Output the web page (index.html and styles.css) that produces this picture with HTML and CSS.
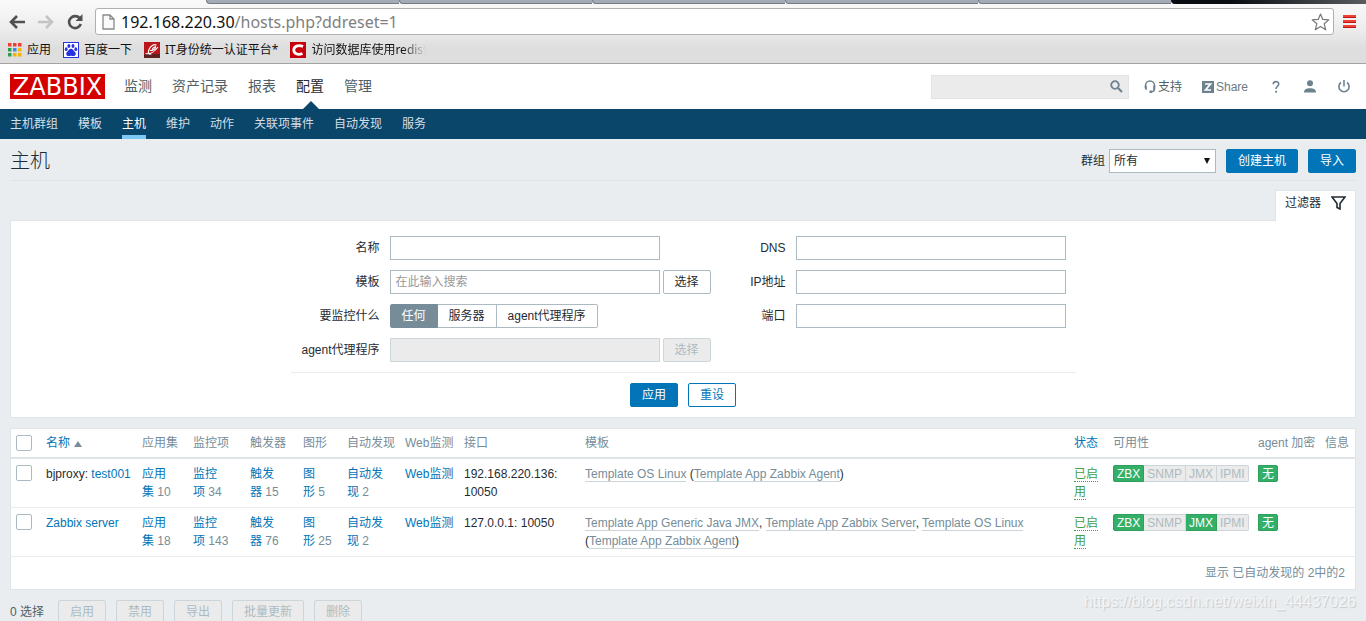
FILE: index.html
```html
<!DOCTYPE html>
<html lang="zh-CN">
<head>
<meta charset="utf-8">
<title>主机</title>
<link rel="stylesheet" href="styles.css">
</head>
<body>
<div class="browser">
  <div class="tabstrip"><span class="tab-active"></span><span class="tab"></span><span class="tab"></span><span class="tab"></span><span class="tab"></span><span class="tab"></span><span class="tab-rest"></span></div>
  <div class="toolbar">
    <button class="tool" aria-label="后退"><svg width="18" height="16" viewBox="0 0 18 16"><path d="M9 2 3 8l6 6M3 8h14" fill="none" stroke="#505050" stroke-width="2.6"/></svg></button>
    <button class="tool" aria-label="前进"><svg width="18" height="16" viewBox="0 0 18 16"><path d="M9 2l6 6-6 6M15 8H1" fill="none" stroke="#c4c4c4" stroke-width="2.6"/></svg></button>
    <button class="tool" aria-label="刷新"><svg width="18" height="16" viewBox="0 0 18 16"><path d="M14 4.6A6 6 0 1 0 14.8 10" fill="none" stroke="#505050" stroke-width="2.6"/><path d="M16.500 0v7H9.500z" fill="#505050"/></svg></button>
    <div class="address">
      <svg width="13" height="16" viewBox="0 0 13 16"><path d="M1 1h7l4 4v10H1zM8 1v4h4" fill="#fafafa" stroke="#8a8a8a" stroke-width="1.300"/></svg>
      <div class="url" role="textbox" contenteditable="true" aria-label="地址" spellcheck="false">192.168.220.30<span>/hosts.php?ddreset=1</span></div>
      <button class="star" aria-label="收藏"><svg width="19" height="18" viewBox="0 0 19 18"><path d="M9.500 1l2.300 5.400 6 .5-4.600 3.900 1.500 6-5.200-3.200-5.200 3.200 1.500-6L1.200 6.900l6-.5z" fill="#fff" stroke="#777" stroke-width="1.200" stroke-linejoin="round"/></svg></button>
    </div>
    <button class="tool menu" aria-label="菜单"><svg width="13" height="13" viewBox="0 0 13 13"><path d="M0 1h13M0 6h13M0 11h13" stroke="#ee4035" stroke-width="2"/><path d="M0 2.500h13M0 7.500h13M0 12.500h13" stroke="#c41414"/></svg></button>
  </div>
  <nav class="bookmarks" aria-label="书签">
    <a href="#"><svg width="14" height="14" viewBox="0 0 14 14"><path d="M0 0h3.500v3.500H0zM5 0h3.500v3.500H5zM10 0h3.500v3.500H10z" fill="#ea4335"/><path d="M0 5h3.500v3.500H0z" fill="#2a9d4e"/><path d="M5 5h3.500v3.500H5z" fill="#3b8be8"/><path d="M10 5h3.500v3.500H10zM5 10h3.500v3.500H5zM10 10h3.500v3.500H10z" fill="#f4b400"/><path d="M0 10h3.500v3.500H0z" fill="#2a9d4e"/></svg>应用</a>
    <a href="#"><svg width="16" height="16" viewBox="0 0 16 16"><rect x=".5" y=".5" width="15" height="15" fill="#fff" stroke="#2932e1"/><g fill="#2932e1"><ellipse cx="5.900" cy="4" rx="1.500" ry="2"/><ellipse cx="10" cy="4" rx="1.500" ry="2"/><ellipse cx="3.200" cy="7.200" rx="1.400" ry="1.900"/><ellipse cx="12.800" cy="7.200" rx="1.400" ry="1.900"/><path d="M8 6.800c2 0 2.500 2.200 4 3.300 1.500 1.200.8 4-1.300 4-1 0-1.700-.4-2.700-.4s-1.700.4-2.700.4c-2.100 0-2.800-2.800-1.300-4 1.500-1.100 2-3.300 4-3.300z"/></g></svg>百度一下</a>
    <a href="#"><svg width="16" height="16" viewBox="0 0 16 16"><rect width="16" height="16" fill="#b9151b"/><path d="M0 12h16v4H0z" fill="#5e2020"/><path d="M12.500 3.300C10 1.500 6.500 4 5 7.500s0 5.500 2.500 4.300M6 8.500c3 0 5-1.500 5.500-3S9.500 5 8.300 7.200M1.500 11.500C6 12.500 11 9.500 14 5" fill="none" stroke="#fff" stroke-width="1.200"/></svg>IT身份统一认证平台*</a>
    <a href="#" class="fade"><svg width="16" height="16" viewBox="0 0 16 16"><rect width="16" height="16" fill="#c8000a"/><path d="M13 4.500C8 2.300 3.800 4.500 3.800 8s3.700 5.500 8.700 3.500" fill="none" stroke="#fff" stroke-width="2.800"/></svg>访问数据库使用redis修</a>
  </nav>
</div>

<header class="top">
  <a href="#" class="logo" aria-label="ZABBIX">ZABBIX</a>
  <nav class="main-nav">
    <a href="#">监测</a><a href="#">资产记录</a><a href="#">报表</a><a href="#" class="current">配置</a><a href="#">管理</a>
  </nav>
  <form class="search">
    <input type="text" aria-label="搜索">
    <button type="button" aria-label="搜索"><svg width="13" height="13" viewBox="0 0 13 13"><circle cx="5" cy="5" r="3.800" fill="none" stroke="#6c838f" stroke-width="1.800"/><path d="M8 8l4 4" stroke="#6c838f" stroke-width="2.200"/></svg></button>
  </form>
  <div class="user-links">
    <a href="#" class="support"><svg width="12" height="13" viewBox="0 0 12 13"><path d="M1.500 8V5.500a4.500 4.500 0 0 1 9 0V9c0 1.800-1 2.700-3 2.700" fill="none" stroke="#6c838f" stroke-width="1.400"/><path d="M.8 5.500h2V10H2L.8 8.500zM9.200 5.500h2v3L10 10h-.8zM5.500 10.500H8V13H5.500z" fill="#6c838f"/></svg>支持</a>
    <a href="#" class="share"><svg width="12" height="12" viewBox="0 0 12 12"><path d="M0 0h12v12H0z" fill="#6c838f"/><path d="M3 3h5.500L3.500 9H9" fill="none" stroke="#fff" stroke-width="1.700"/></svg>Share</a>
    <a href="#" class="icon" aria-label="帮助"><svg width="12" height="14" viewBox="0 0 12 14"><path d="M3.200 4.300C3.200.8 8.700.8 8.700 4c0 2.300-2.600 2.300-2.600 5" fill="none" stroke="#6c838f" stroke-width="1.600"/><path d="M5.200 10.800h1.900v1.900H5.200z" fill="#6c838f"/></svg></a>
    <a href="#" class="icon" aria-label="用户"><svg width="12" height="13" viewBox="0 0 12 13"><circle cx="6" cy="3.300" r="3" fill="#6c838f"/><path d="M0 12.500C0 9 2.500 8.200 6 8.200s6 .8 6 4.300z" fill="#6c838f"/></svg></a>
    <a href="#" class="icon" aria-label="退出"><svg width="12" height="13" viewBox="0 0 12 13"><path d="M3 2.500a5.100 5.100 0 1 0 6 0" fill="none" stroke="#6c838f" stroke-width="1.600"/><path d="M6 0v6.500" stroke="#6c838f" stroke-width="1.600"/></svg></a>
  </div>
</header>
<nav class="sub-nav">
  <a href="#">主机群组</a><a href="#">模板</a><a href="#" class="current">主机</a><a href="#">维护</a><a href="#">动作</a><a href="#">关联项事件</a><a href="#">自动发现</a><a href="#">服务</a>
</nav>

<main>
  <div class="title-bar">
    <h1>主机</h1>
    <form class="title-actions">
      <label for="group">群组</label>
      <span class="select"><select id="group"><option>所有</option></select></span>
      <button type="button" class="btn primary">创建主机</button>
      <button type="button" class="btn primary">导入</button>
    </form>
  </div>

  <div class="filter-tab"><button type="button">过滤器<svg width="15" height="14" viewBox="0 0 15 14"><path d="M1 1h13L9 7.500V13l-3-1.500v-4z" fill="none" stroke="#1f2c33" stroke-width="1.600"/></svg></button></div>
  <form class="filter">
    <div class="fields">
      <label for="name">名称</label>
      <div class="field"><input id="name" type="text"></div>
      <label for="dns">DNS</label>
      <div class="field"><input id="dns" type="text"></div>
      <label for="tpl">模板</label>
      <div class="field"><input id="tpl" type="text" placeholder="在此输入搜索"><button type="button" class="btn plain">选择</button></div>
      <label for="ip">IP地址</label>
      <div class="field"><input id="ip" type="text"></div>
      <span class="label" id="monitored">要监控什么</span>
      <div class="segments" role="radiogroup" aria-labelledby="monitored">
        <label><input type="radio" name="m" checked><span>任何</span></label><label><input type="radio" name="m"><span>服务器</span></label><label><input type="radio" name="m"><span>agent代理程序</span></label>
      </div>
      <label for="port">端口</label>
      <div class="field"><input id="port" type="text"></div>
      <label for="proxy">agent代理程序</label>
      <div class="field"><input id="proxy" type="text" disabled><button type="button" class="btn" disabled>选择</button></div>
    </div>
    <div class="filter-actions">
      <button type="button" class="btn primary">应用</button>
      <button type="button" class="btn outline">重设</button>
    </div>
  </form>

  <div class="list">
  <table>
    <colgroup><col class="c-check"><col class="c-name"><col class="c-apps"><col class="c-items"><col class="c-trig"><col class="c-graph"><col class="c-disc"><col class="c-web"><col class="c-iface"><col><col class="c-status"><col class="c-avail"><col class="c-enc"><col class="c-info"></colgroup>
    <thead><tr>
      <th><input type="checkbox" aria-label="全选"></th>
      <th><a href="#">名称<svg class="sort" width="8" height="6" viewBox="0 0 8 6"><path d="M4 0l4 6H0z" fill="#768d99"/></svg></a></th>
      <th>应用集</th><th>监控项</th><th>触发器</th><th>图形</th><th>自动发现</th><th>Web监测</th><th>接口</th><th>模板</th><th><a href="#">状态</a></th><th>可用性</th><th>agent 加密</th><th>信息</th>
    </tr></thead>
    <tbody>
    <tr>
      <td><input type="checkbox" aria-label="test001"></td>
      <td>bjproxy: <a href="#">test001</a></td>
      <td><a href="#">应用集</a><span class="count">&nbsp;10</span></td>
      <td><a href="#">监控项</a><span class="count">&nbsp;34</span></td>
      <td><a href="#">触发器</a><span class="count">&nbsp;15</span></td>
      <td class="narrow"><a href="#">图形</a><span class="count">&nbsp;5</span></td>
      <td><a href="#">自动发现</a><span class="count">&nbsp;2</span></td>
      <td><a href="#">Web监测</a></td>
      <td>192.168.220.136: 10050</td>
      <td><a href="#" class="tpl">Template OS Linux</a> (<a href="#" class="tpl">Template App Zabbix Agent</a>)</td>
      <td><a href="#" class="enabled">已启用</a></td>
      <td><span class="badges"><span class="on">ZBX</span><span>SNMP</span><span>JMX</span><span>IPMI</span></span></td>
      <td><span class="badges"><span class="on none">无</span></span></td>
      <td></td>
    </tr>
    <tr>
      <td><input type="checkbox" aria-label="Zabbix server"></td>
      <td><a href="#">Zabbix server</a></td>
      <td><a href="#">应用集</a><span class="count">&nbsp;18</span></td>
      <td><a href="#">监控项</a><span class="count">&nbsp;143</span></td>
      <td><a href="#">触发器</a><span class="count">&nbsp;76</span></td>
      <td class="narrow"><a href="#">图形</a><span class="count">&nbsp;25</span></td>
      <td><a href="#">自动发现</a><span class="count">&nbsp;2</span></td>
      <td><a href="#">Web监测</a></td>
      <td>127.0.0.1: 10050</td>
      <td class="templates"><a href="#" class="tpl">Template App Generic Java JMX</a>, <a href="#" class="tpl">Template App Zabbix Server</a>, <a href="#" class="tpl">Template OS Linux</a> (<a href="#" class="tpl">Template App Zabbix Agent</a>)</td>
      <td><a href="#" class="enabled">已启用</a></td>
      <td><span class="badges"><span class="on">ZBX</span><span>SNMP</span><span class="on">JMX</span><span>IPMI</span></span></td>
      <td><span class="badges"><span class="on none">无</span></span></td>
      <td></td>
    </tr>
    </tbody>
  </table>
  <div class="summary">显示 已自动发现的 2中的2</div>
  </div>

  <div class="bulk">
    <span>0 选择</span>
    <button class="btn" disabled>启用</button><button class="btn" disabled>禁用</button><button class="btn" disabled>导出</button><button class="btn" disabled>批量更新</button><button class="btn" disabled>删除</button>
  </div>
</main>
<div class="watermark">https://blog.csdn.net/weixin_44437026</div>
</body>
</html>
```
FILE: styles.css
```css
* { box-sizing: border-box; }
body {
  margin: 0;
  height: 100vh;
  overflow: hidden;
  position: relative;
  background: #e9edf0;
  color: #1f2c33;
  font: 12px/18px "Liberation Sans", "Noto Sans CJK SC", sans-serif;
}
a { color: #0275b8; text-decoration: none; }
button, input, select { font: inherit; color: inherit; margin: 0; }
button { cursor: pointer; }
svg { display: block; flex: none; }

/* browser frame */
.browser {
  background: linear-gradient(#fafafa, #ececec 30px, #dedede 48px);
  border-bottom: 1px solid #a3a3a3;
}
.tabstrip { display: flex; height: 4px; background: #f8f8f8; }
.tab-active { width: 206px; border-top-left-radius: 4px; }
.tab { flex: 1; background: #a4abb6; border-bottom: 1px solid #747a84; border-left: 1px solid #747a84; border-bottom-left-radius: 4px; }
.tab-rest { width: 195px; background: linear-gradient(90deg, #080b10 30%, #5a5d60); border-bottom-left-radius: 4px; }
.toolbar { display: flex; align-items: center; padding: 4px 10px 4px 8px; }
.tool { background: none; border: 0; padding: 0; margin-right: 11px; }
.address {
  flex: 1;
  display: flex;
  align-items: center;
  height: 27px;
  padding: 0 3px 0 6px;
  background: #fff;
  border: 1px solid #b0b0b0;
  border-radius: 3px;
}
.url { flex: 1; margin-left: 6px; font: 16px/24px "Noto Sans", sans-serif; color: #111; outline: 0; }
.url span { color: #808080; }
.star { background: none; border: 0; padding: 0; }
.menu { margin: 0 0 0 9px; }
.bookmarks { display: flex; gap: 12px; padding: 1px 8px 4px; }
.bookmarks a {
  display: flex;
  align-items: center;
  gap: 5px;
  height: 19px;
  color: #111;
  white-space: nowrap;
  font-family: "Noto Sans", "Noto Sans CJK SC", sans-serif;
}
.bookmarks .fade {
  width: 136px;
  overflow: hidden;
  -webkit-mask-image: linear-gradient(90deg, #000 112px, transparent);
  mask-image: linear-gradient(90deg, #000 112px, transparent);
}

/* header */
.top { display: flex; align-items: center; height: 45px; padding: 0 16px 0 10px; background: #fff; }
.logo {
  width: 95px;
  height: 25px;
  background: #d40000;
  color: #fff;
  font: 24px/27px "DejaVu Sans", sans-serif;
  text-align: center;
}
.main-nav { display: flex; gap: 20px; height: 100%; margin-left: 19px; font-size: 14px; line-height: 45px; }
.main-nav a { color: #4f5f68; position: relative; }
.main-nav .current { color: #1f2c33; }
.main-nav .current::after {
  content: "";
  position: absolute;
  bottom: 0;
  left: 7px;
  border: solid transparent;
  border-width: 0 8px 8px;
  border-bottom-color: #0a466a;
}
.search {
  display: flex;
  align-items: center;
  width: 198px;
  height: 24px;
  margin-left: auto;
  background: #ebebeb;
  border: 1px solid #dfe4e7;
}
.search input { flex: 1; min-width: 0; height: 22px; border: 0; background: none; }
.search button { border: 0; background: none; padding: 0 5px; }
.user-links { display: flex; align-items: center; }
.user-links a { display: flex; align-items: center; gap: 2px; color: #4f5f68; }
.user-links .support { margin-left: 15px; }
.user-links .share { margin-left: 20px; color: #6c7a82; }
.user-links .icon { margin-left: 22px; }
.sub-nav { display: flex; gap: 20px; padding: 0 10px; background: #0a466a; }
.sub-nav a { color: #d3dfe8; line-height: 30px; height: 30px; }
.sub-nav .current { color: #fff; box-shadow: inset 0 -4px #7ec8f5; }

/* page */
main { padding: 0 10px; }
.title-bar {
  display: flex;
  align-items: center;
  justify-content: space-between;
  height: 42px;
  padding-top: 3px;
  border-bottom: 1px solid #dfe4e7;
}
h1 { margin: 0; font-size: 20px; line-height: 24px; font-weight: 300; }
.title-actions { display: flex; align-items: center; }
.title-actions label { margin-right: 4px; }
.title-actions .btn { margin-left: 10px; }
.select { position: relative; display: block; }
.select select {
  display: block;
  appearance: none;
  width: 107px;
  height: 24px;
  padding: 0 4px;
  border: 1px solid #acbbc2;
  border-radius: 0;
  background: #fff;
}
.select::after {
  content: "";
  position: absolute;
  right: 6px;
  top: 9px;
  border: solid transparent;
  border-width: 6px 3px 0;
  border-top-color: #111;
}
.btn {
  height: 24px;
  padding: 0 11px;
  border: 1px solid #acbbc2;
  border-radius: 2px;
  background: #fff;
  line-height: 22px;
  white-space: nowrap;
}
.btn.primary { background: #0275b8; border-color: #0275b8; color: #fff; }
.btn.outline { border-color: #0275b8; color: #0275b8; }
.btn:disabled { background: #ebebeb; border-color: #ccd5d9; color: #acbbc2; cursor: default; }

.filter-tab { display: flex; justify-content: flex-end; margin-top: 9px; }
.filter-tab button {
  display: flex;
  align-items: center;
  gap: 10px;
  height: 31px;
  margin-bottom: -1px;
  padding: 0 9px 6px;
  position: relative;
  background: #fff;
  border: 1px solid #dfe4e7;
  border-bottom: 0;
}
.filter { padding: 15px 10px 10px; background: #fff; border: 1px solid #dfe4e7; }
.fields {
  display: grid;
  grid-template-columns: 89px 321px 65px 270px;
  gap: 10px;
  width: 785px;
  margin: 0 auto;
  padding: 0 10px 10px 0;
  border-bottom: 1px solid #ebebeb;
}
.fields > label, .label { text-align: right; line-height: 24px; white-space: nowrap; }
.field { display: flex; gap: 3px; }
.field input {
  flex: none;
  width: 270px;
  height: 24px;
  padding: 0 5px;
  border: 1px solid #acbbc2;
  background: #fff;
}
.field .btn { width: 48px; padding: 0; }
.field input:disabled { background: #ebebeb; border-color: #ccd5d9; }
.field input::placeholder { color: #999; }
.segments { display: flex; }
.segments input { position: absolute; opacity: 0; }
.segments span {
  display: block;
  height: 24px;
  padding: 0 11px;
  border: 1px solid #acbbc2;
  border-left-width: 0;
  line-height: 22px;
}
.segments label:first-child span { border-radius: 2px 0 0 2px; }
.segments label:last-child span { border-radius: 0 2px 2px 0; }
.segments input:checked + span { background: #768d99; border-color: #768d99; border-left-width: 1px; color: #fff; }
.filter-actions { display: flex; justify-content: center; gap: 10px; padding-top: 10px; }
.filter-actions .btn { width: 48px; }

.list { margin-top: 10px; background: #fff; border: 1px solid #dfe4e7; }
table { width: 100%; table-layout: fixed; border-collapse: separate; border-spacing: 0; }
.c-check { width: 30px; }
.c-name { width: 96px; }
.c-apps { width: 51px; }
.c-items { width: 57px; }
.c-trig { width: 53px; }
.c-graph { width: 44px; }
.c-disc { width: 58px; }
.c-web { width: 59px; }
.c-iface { width: 121px; }
.c-status { width: 39px; }
.c-avail { width: 145px; }
.c-enc { width: 67px; }
.c-info { width: 35px; }
th {
  height: 30px;
  padding: 0 5px;
  text-align: left;
  font-weight: 400;
  color: #768d99;
  white-space: nowrap;
  border-bottom: 2px solid #dfe4e7;
}
td { padding: 6px 5px; vertical-align: top; border-bottom: 1px solid #ebebeb; }
td.narrow { padding-right: 8px; }
td.templates { padding-right: 36px; }
.sort { display: inline-block; margin-left: 4px; }
.count { color: #768d99; }
.tpl { color: #768d99; border-bottom: 1px solid #ccd5d9; }
.enabled { color: #429e47; border-bottom: 1px dotted #429e47; }
input[type="checkbox"] {
  display: block;
  appearance: none;
  width: 16px;
  height: 16px;
  border: 1px solid #acbbc2;
  border-radius: 2px;
  background: #fff;
}
.badges { display: flex; }
.badges span {
  height: 17px;
  padding: 0 3px;
  border: 1px solid #ccd5d9;
  border-left-width: 0;
  background: #ebebeb;
  color: #acbbc2;
  line-height: 16px;
}
.badges .on { background: #34af67; border-color: #2f9f5e; color: #fff; }
.badges span:first-child { border-left-width: 1px; border-radius: 2px 0 0 2px; }
.badges span:last-child { border-radius: 0 2px 2px 0; }
.badges .none { border-radius: 2px; }
.summary { padding: 7px 10px 7px; text-align: right; color: #768d99; }
.bulk { display: flex; align-items: center; gap: 10px; margin-top: 10px; }
.bulk span { margin-right: 4px; color: #4f5f68; }

.watermark {
  position: absolute;
  right: 10px;
  bottom: 9px;
  font-size: 16px;
  line-height: 20px;
  color: #f3f5f6;
  text-shadow: 1px 1px 1px #c4c8cb;
}
```
